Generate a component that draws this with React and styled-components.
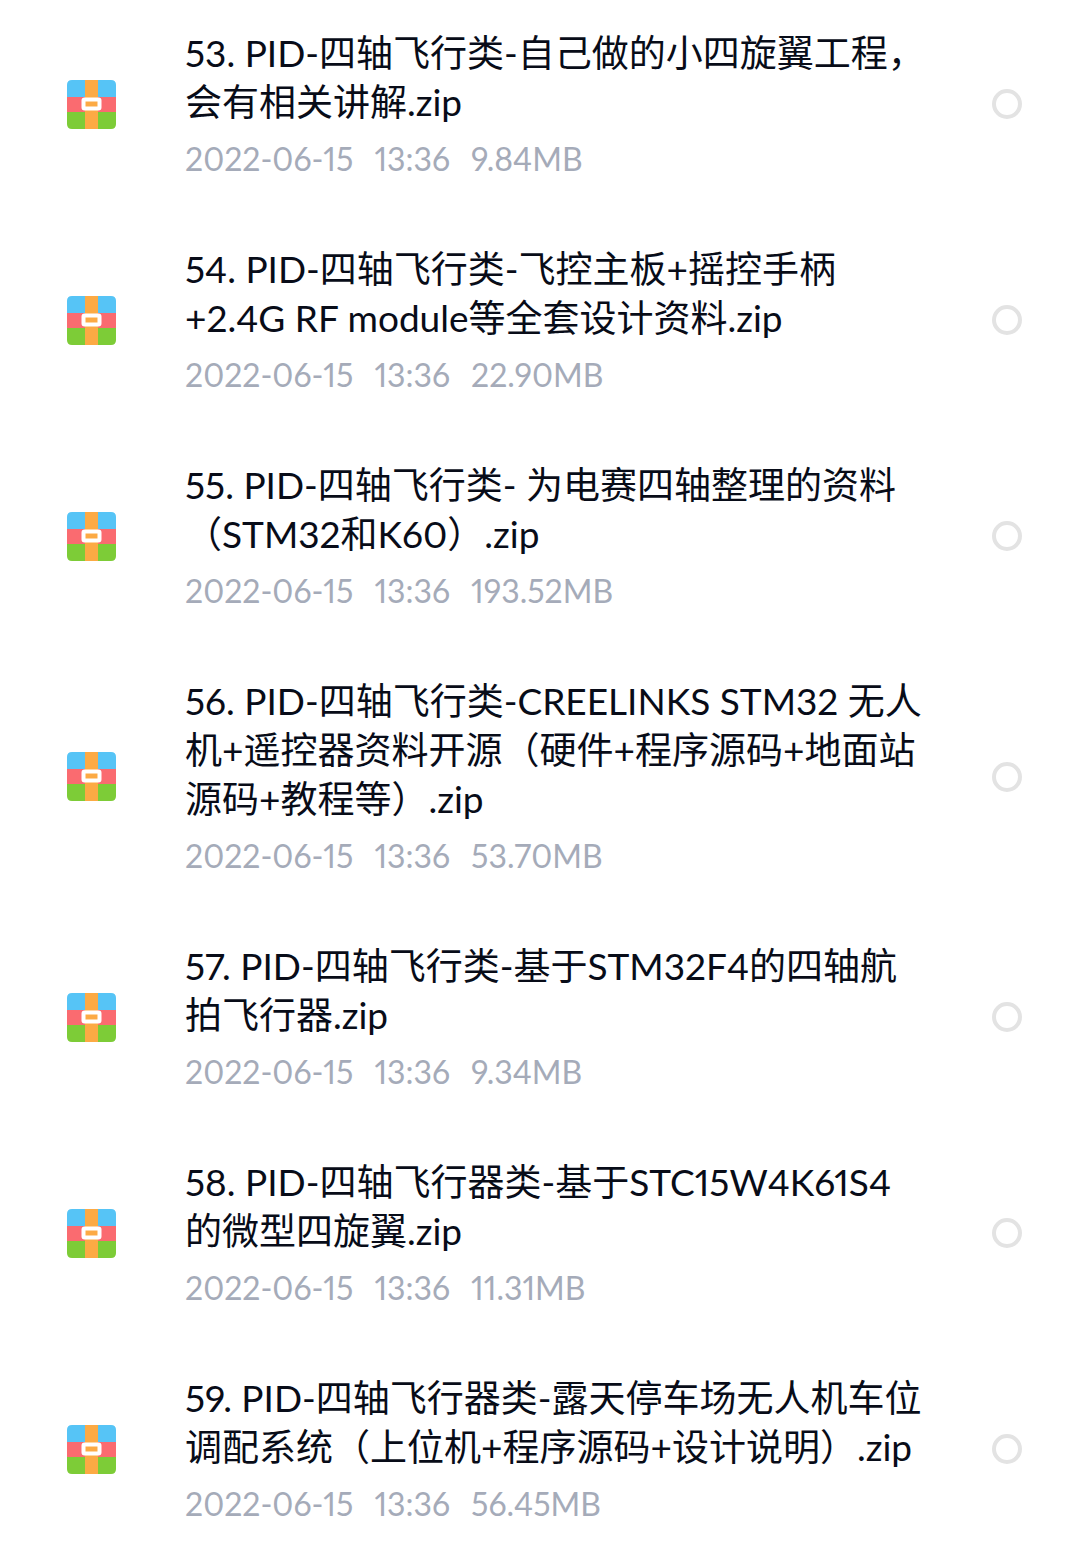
import React, { useState } from "react";
import styled, { createGlobalStyle } from "styled-components";

const GlobalStyle = createGlobalStyle`
    body {
        margin: 0;
        background: #fff;
        font-family: Lato, "Noto Sans CJK SC", sans-serif;
        font-variant-numeric: proportional-nums;
    }
`;

const List = styled.ul`
    display: flex;
    flex-direction: column;
    gap: 64px;
    margin: 0;
    padding: 28px 58px 18px 67px;
    list-style: none;
`;

const Row = styled.li`
    display: flex;
    align-items: center;
`;

const FileLabel = styled.label`
    flex: 1;
    display: flex;
    align-items: center;
    gap: 69px;
    min-width: 0;
    cursor: pointer;
`;

const Icon = styled.svg`
    flex: none;
    width: 49px;
    height: 49px;
`;

const Details = styled.div`
    flex: 1;
    min-width: 0;
`;

const Title = styled.div`
    color: #080c18;
    font-size: 37px;
    line-height: 49px;
    white-space: pre-line;
`;

const Meta = styled.div`
    display: flex;
    gap: 21px;
    margin-top: 12px;
    color: #a5abb9;
    font-size: 32px;
    line-height: 42px;
`;

const Check = styled.input`
    appearance: none;
    flex: none;
    width: 30px;
    height: 30px;
    margin: 0;
    border: 4px solid #e3e3e3;
    border-radius: 50%;
    cursor: pointer;

    &:checked {
        border-color: #3b82f6;
        background: #3b82f6;
    }
`;

const ZipIcon = () => (
    <Icon viewBox="0 0 49 49" aria-hidden="true">
        <path d="M5 0H44Q49 0 49 5V17H0V5Q0 0 5 0Z" fill="#56c4f6" />
        <path d="M0 17H49V32H0Z" fill="#fa6b70" />
        <path d="M0 32H49V44Q49 49 44 49H5Q0 49 0 44Z" fill="#7dcc37" />
        <path d="M18 0H31V49H18Z" fill="#fcaa44" />
        <rect x="16.5" y="19.5" width="16" height="9" rx="1" fill="#fcaa44" stroke="#fff" strokeWidth="4" />
    </Icon>
);

const files = [
    {
        id: 53,
        title: "53. PID-四轴飞行类-自己做的小四旋翼工程，\n会有相关讲解.zip",
        size: "9.84MB",
    },
    {
        id: 54,
        title: "54. PID-四轴飞行类-飞控主板+摇控手柄\n+2.4G RF module等全套设计资料.zip",
        size: "22.90MB",
    },
    {
        id: 55,
        title: "55. PID-四轴飞行类- 为电赛四轴整理的资料\n（STM32和K60）.zip",
        size: "193.52MB",
    },
    {
        id: 56,
        title: "56. PID-四轴飞行类-CREELINKS STM32 无人\n机+遥控器资料开源（硬件+程序源码+地面站\n源码+教程等）.zip",
        size: "53.70MB",
    },
    {
        id: 57,
        title: "57. PID-四轴飞行类-基于STM32F4的四轴航\n拍飞行器.zip",
        size: "9.34MB",
    },
    {
        id: 58,
        title: "58. PID-四轴飞行器类-基于STC15W4K61S4\n的微型四旋翼.zip",
        size: "11.31MB",
    },
    {
        id: 59,
        title: "59. PID-四轴飞行器类-露天停车场无人机车位\n调配系统（上位机+程序源码+设计说明）.zip",
        size: "56.45MB",
    },
];

const App = () => {
    const [selected, setSelected] = useState([]);

    const toggle = (id) => {
        setSelected(
            selected.includes(id)
                ? selected.filter((item) => item !== id)
                : [...selected, id]
        );
    };

    return (
        <>
            <GlobalStyle />
            <List>
                {files.map(({ id, title, size }) => (
                    <Row key={id}>
                        <FileLabel htmlFor={`file-${id}`}>
                            <ZipIcon />
                            <Details>
                                <Title>{title}</Title>
                                <Meta>
                                    <span>2022-06-15</span>
                                    <span>13:36</span>
                                    <span>{size}</span>
                                </Meta>
                            </Details>
                        </FileLabel>
                        <Check
                            type="checkbox"
                            id={`file-${id}`}
                            checked={selected.includes(id)}
                            onChange={() => toggle(id)}
                        />
                    </Row>
                ))}
            </List>
        </>
    );
};

export default App;
